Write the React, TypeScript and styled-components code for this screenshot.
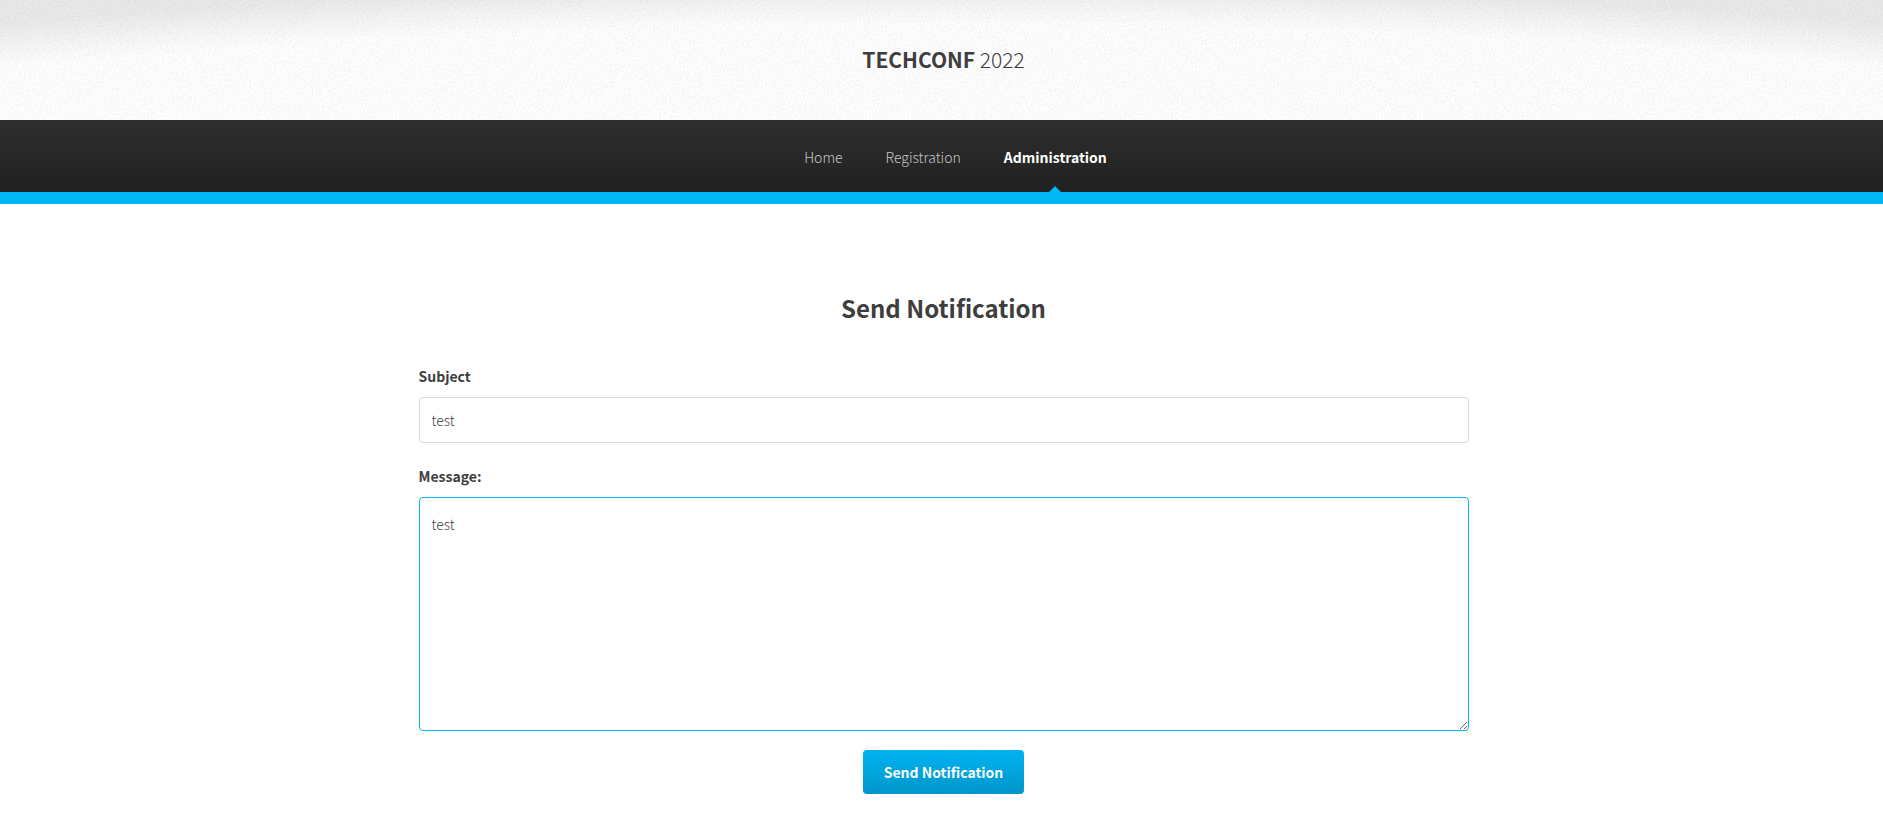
import React from "react";
import styled, { createGlobalStyle, css } from "styled-components";

const accent = "#00b6f5";

const GlobalStyle = createGlobalStyle`
  *, *::before, *::after { box-sizing: border-box; }
  body {
    margin: 0;
    background: #fff;
    color: #3e3e3e;
    font: 300 14px/24px "Source Sans Pro", "Noto Sans CJK SC", sans-serif;
  }
`;

const Header = styled.header`
  position: relative;
  display: flex;
  align-items: center;
  justify-content: center;
  height: 120px;
  padding: 0 0 2px 4px;
  background: radial-gradient(ellipse 100% 330px at 50% 354px, #fff 100%, #f5f5f5 106%, #eaeaea 112%);
`;

const Brand = styled.h1`
  margin: 0;
  font-size: 21px;
  line-height: 32px;
  font-weight: 300;

  strong { font-weight: 700; }
`;

const GrainLayer = styled.svg`
  position: absolute;
  inset: 0;
  width: 100%;
  height: 100%;
  pointer-events: none;
`;

const Nav = styled.nav`
  height: 84px;
  border-bottom: 12px solid ${accent};
  background: linear-gradient(#2e2e2e, #212121);
`;

const NavList = styled.ul`
  display: flex;
  justify-content: center;
  gap: 43px;
  margin: 0;
  padding: 0 0 0 28px;
  list-style: none;
`;

const NavLink = styled.a<{ $active?: boolean }>`
  position: relative;
  display: block;
  height: 72px;
  line-height: 74px;
  color: #c8c8c8;
  text-decoration: none;

  ${({ $active }) =>
    $active &&
    css`
      color: #fff;
      font-weight: 700;

      &::after {
        content: "";
        position: absolute;
        left: 50%;
        bottom: 0;
        border: 6px solid transparent;
        border-top: 0;
        border-bottom-color: ${accent};
        transform: translateX(-50%);
      }
    `}
`;

const Main = styled.main`
  display: flex;
  justify-content: center;
  padding: 84px 0 24px 4px;
`;

const Form = styled.form`
  display: flex;
  flex-direction: column;
  width: 100%;
  max-width: 1050px;
`;

const Title = styled.h2`
  margin: 0 0 36px;
  font-size: 24px;
  line-height: 40px;
  font-weight: 700;
  text-align: center;
`;

const Label = styled.label`
  margin-bottom: 9px;
  font-weight: 700;
`;

const fieldStyle = css`
  display: block;
  width: 100%;
  margin: 0;
  padding: 10px 12px;
  border: 1px solid #d8d8d8;
  border-radius: 4px;
  outline: 0;
  background: #fff;
  color: inherit;
  font: inherit;
`;

const TextInput = styled.input`
  ${fieldStyle}
  height: 46px;
  margin-bottom: 21px;
`;

const TextArea = styled.textarea`
  ${fieldStyle}
  height: 234px;
  padding-top: 14px;
  margin-bottom: 19px;
  border-color: ${accent};
  resize: vertical;
`;

const SubmitButton = styled.button`
  position: relative;
  align-self: center;
  overflow: hidden;
  height: 44px;
  padding: 0 21px;
  border: 0;
  border-radius: 4px;
  background: linear-gradient(${accent}, #0098ce);
  color: #fff;
  font: inherit;
  font-weight: 700;
  cursor: pointer;
`;

function Grain({ id }: { id: string }) {
  return (
    <GrainLayer aria-hidden="true">
      <filter id={id} x="0" y="0" width="100%" height="100%" colorInterpolationFilters="sRGB">
        <feTurbulence type="fractalNoise" baseFrequency="0.5" numOctaves="2" stitchTiles="stitch" />
        <feColorMatrix values="0 0 0 0 0  0 0 0 0 0  0 0 0 0 0  0.1 0 0 0 -0.034" />
      </filter>
      <rect width="100%" height="100%" filter={`url(#${id})`} />
    </GrainLayer>
  );
}

const links = ["Home", "Registration", "Administration"];

export default function App() {
  return (
    <>
      <GlobalStyle />
      <Header>
        <Grain id="header-grain" />
        <Brand>
          <strong>TECHCONF</strong> 2022
        </Brand>
      </Header>
      <Nav>
        <NavList>
          {links.map((name) => (
            <li key={name}>
              <NavLink href="#" $active={name === "Administration"}>
                {name}
              </NavLink>
            </li>
          ))}
        </NavList>
      </Nav>
      <Main>
        <Form onSubmit={(event) => event.preventDefault()}>
          <Title>Send Notification</Title>
          <Label htmlFor="subject">Subject</Label>
          <TextInput id="subject" type="text" defaultValue="test" />
          <Label htmlFor="message">Message:</Label>
          <TextArea id="message" defaultValue="test" />
          <SubmitButton type="submit">
            <Grain id="button-grain" />
            Send Notification
          </SubmitButton>
        </Form>
      </Main>
    </>
  );
}
